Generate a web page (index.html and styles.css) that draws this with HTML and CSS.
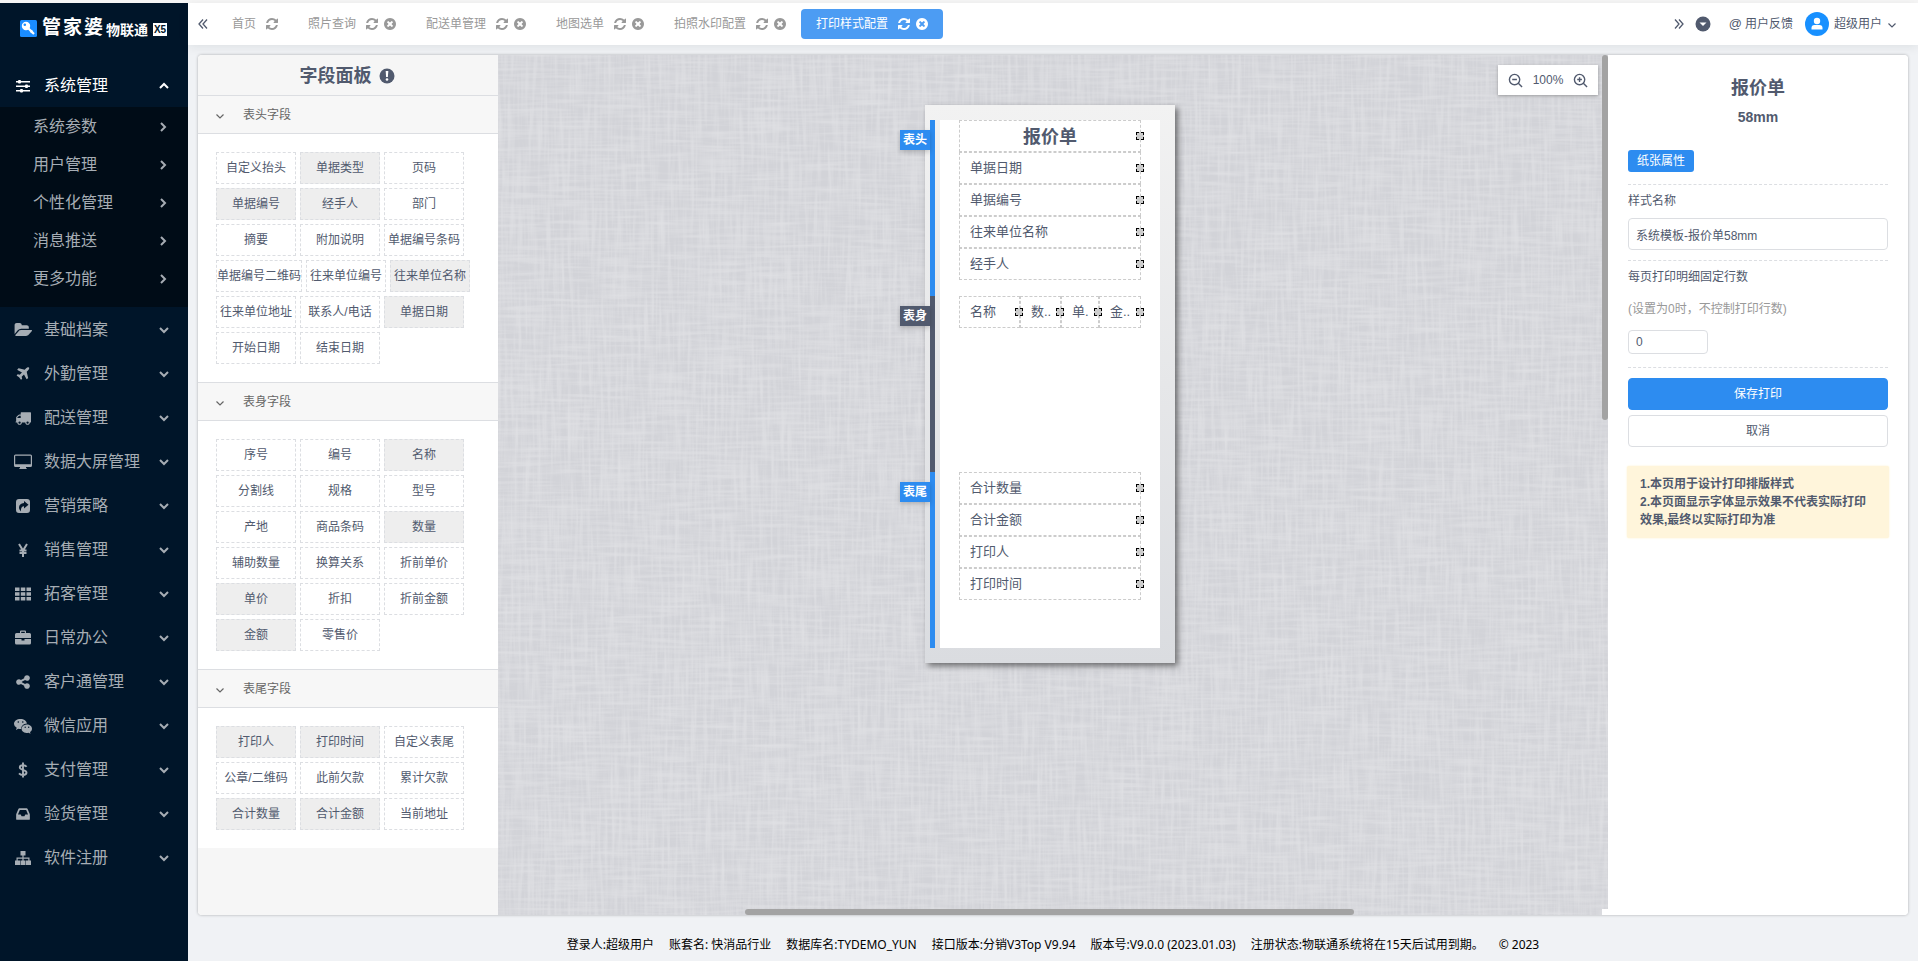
FILE: index.html
```html
<!DOCTYPE html>
<html lang="zh-CN">
<head>
<meta charset="utf-8">
<title>打印样式配置</title>
<link rel="stylesheet" href="styles.css">
</head>
<body>
<svg class="sprite" aria-hidden="true">
  <symbol id="i-refresh" viewBox="0 0 1792 1792"><path d="M1639 1056q0 5-1 7-64 268-268 434.500t-478 166.500q-146 0-282.500-55t-243.500-157l-129 129q-19 19-45 19t-45-19-19-45v-448q0-26 19-45t45-19h448q26 0 45 19t19 45-19 45l-137 137q71 66 161 102t187 36q134 0 250-65t186-179q11-17 53-117 8-23 30-23h192q13 0 22.500 9.500t9.500 22.500zm25-800v448q0 26-19 45t-45 19h-448q-26 0-45-19t-19-45 19-45l138-138q-148-137-349-137-134 0-250 65t-186 179q-11 17-53 117-8 23-30 23h-199q-13 0-22.500-9.500t-9.500-22.500v-7q65-268 270-434.500t480-166.500q146 0 284 55.500t245 156.500l130-129q19-19 45-19t45 19 19 45z"/></symbol>
  <symbol id="i-close" viewBox="0 0 1792 1792"><path d="M1277 1122q0-26-19-45l-181-181 181-181q19-19 19-45 0-27-19-46l-90-90q-19-19-46-19-26 0-45 19l-181 181-181-181q-19-19-45-19-27 0-46 19l-90 90q-19 19-19 46 0 26 19 45l181 181-181 181q-19 19-19 45 0 27 19 46l90 90q19 19 46 19 26 0 45-19l181-181 181 181q19 19 45 19 27 0 46-19l90-90q19-19 19-46zm387-226q0 209-103 385.500t-279.500 279.500-385.500 103-385.500-103-279.500-279.500-103-385.500 103-385.500 279.500-279.500 385.500-103 385.500 103 279.500 279.500 103 385.500z"/></symbol>
  <symbol id="i-sliders" viewBox="0 0 18 18"><path d="M2 4h14v1.500H2zM2 8.500h14V10H2zM2 13h14v1.500H2z"/><rect x="4" y="3" width="3" height="3.500" rx="1"/><rect x="11" y="7.500" width="3" height="3.500" rx="1"/><rect x="6" y="12" width="3" height="3.500" rx="1"/></symbol>
  <symbol id="i-folder" viewBox="0 0 1943 1792"><path d="M1943 952q0 31-31 66l-336 396q-43 51-120.500 86.500t-143.500 35.500h-1088q-34 0-60.500-13t-26.500-43q0-31 31-66l336-396q43-51 120.500-86.500t143.500-35.500h1088q34 0 60.500 13t26.500 43zm-343-344v160h-832q-94 0-197 47.500t-164 119.500l-337 396-5 6q0-4-.500-12.500t-.500-12.500v-960q0-92 66-158t158-66h320q92 0 158 66t66 158v32h544q92 0 158 66t66 158z"/></symbol>
  <symbol id="i-plane" viewBox="0 0 1792 1792"><path d="M1568 160q44 52 12 148t-108 172l-161 161 160 696q5 19-12 33l-128 96q-7 6-19 6-4 0-7-1-15-3-21-16l-279-508-259 259 53 194q5 17-8 31l-96 96q-9 9-23 9h-2q-15-2-24-13l-189-252-252-189q-11-7-13-23-1-13 9-25l96-97q9-9 23-9 6 0 8 1l194 53 259-259-508-279q-14-8-17-24-2-16 9-27l128-128q14-13 30-8l665 159 160-160q76-76 172-108t148 12z"/></symbol>
  <symbol id="i-truck" viewBox="0 0 1792 1792"><path d="M640 1408q0-52-38-90t-90-38-90 38-38 90 38 90 90 38 90-38 38-90zm-384-512h384v-256h-158q-13 0-22 9l-195 195q-9 9-9 22v30zm1280 512q0-52-38-90t-90-38-90 38-38 90 38 90 90 38 90-38 38-90zm256-1088v1024q0 15-4 26.500t-13.500 18.500-16.500 11.500-23.500 6-22.500 2-25.500 0-22.500-.500q0 106-75 181t-181 75-181-75-75-181h-384q0 106-75 181t-181 75-181-75-75-181h-64q-3 0-22.500.500t-25.500 0-22.500-2-23.500-6-16.500-11.500-13.500-18.500-4-26.500q0-26 19-45t45-19v-320q0-8-.500-35t0-38 2.500-34.500 6.500-37 14-30.500 22.500-30l198-198q19-19 50.500-32t58.500-13h160v-192q0-26 19-45t45-19h1024q26 0 45 19t19 45z"/></symbol>
  <symbol id="i-desktop" viewBox="0 0 18 18"><path fill-rule="evenodd" d="M1.500 1.500h15Q18 1.500 18 3v9.500q0 1.500-1.500 1.500H12v1q1 .500 1 1H5q0-.500 1-1v-1H1.500Q0 14 0 12.500V3q0-1.500 1.500-1.500zM1.200 2.700v8.600h15.600V2.700z"/></symbol>
  <symbol id="i-share" viewBox="0 0 18 18"><path fill-rule="evenodd" d="M5 2h8q3 0 3 3v8q0 3-3 3H5q-3 0-3-3V5q0-3 3-3zM10 4v2Q5 6.500 5 10.500q0 2 2 4-.500-5 3-5.300V11.500L14.500 7.700z"/></symbol>
  <symbol id="i-yen" viewBox="0 0 18 18"><path d="M5 3l4 6.500L13 3M9 9v7M5.500 9.500h7M5.500 12h7" fill="none" stroke="currentColor" stroke-width="2"/></symbol>
  <symbol id="i-grid" viewBox="0 0 18 18"><path d="M1 2.500h4.500v3.500H1zM6.800 2.500h4.500v3.500H6.800zM12.500 2.500H17v3.500h-4.500zM1 7.300h4.500v3.500H1zM6.800 7.300h4.500v3.500H6.800zM12.500 7.300H17v3.500h-4.500zM1 12h4.500v3.500H1zM6.800 12h4.500v3.500H6.800zM12.500 12H17v3.500h-4.500z"/></symbol>
  <symbol id="i-case" viewBox="0 0 18 18"><path fill-rule="evenodd" d="M6 4V2.500Q6 1.500 7 1.500h4q1 0 1 1V4h3.500Q17 4 17 5.500V9H1V5.500Q1 4 2.500 4zM7.200 4h3.600V2.700H7.200zM1 10h6.500v1.500h3V10H17v4q0 1.500-1.500 1.500h-13Q1 15.500 1 14z"/></symbol>
  <symbol id="i-nodes" viewBox="0 0 1792 1792"><path d="M1344 1024q133 0 226.500 93.500t93.500 226.500-93.500 226.500-226.500 93.500-226.500-93.500-93.500-226.500q0-12 2-34l-360-180q-92 86-218 86-133 0-226.500-93.500t-93.500-226.500 93.500-226.500 226.500-93.500q126 0 218 86l360-180q-2-22-2-34 0-133 93.500-226.500t226.500-93.500 226.500 93.500 93.500 226.500-93.500 226.500-226.500 93.500q-126 0-218-86l-360 180q2 22 2 34t-2 34l360 180q92-86 218-86z"/></symbol>
  <symbol id="i-wechat" viewBox="0 0 18 18"><path fill-rule="evenodd" d="M6.500 2C10 2 12.500 4 13 6.600 9.500 6.800 7 9 7.300 12q-1.200.200-3-.300L2 13l.700-2.200Q0 9 0 6.900C0 4 3 2 6.500 2zM3.500 5a.8.8 0 1 0 1.600 0 .8.8 0 1 0-1.600 0zM8 5a.8.8 0 1 0 1.600 0A.8.8 0 1 0 8 5z"/><path fill-rule="evenodd" d="M12.800 7.500c3 0 5.200 1.900 5.200 4.200 0 1.500-.800 2.600-2 3.400l.500 1.700-2-1q-4 .900-6-1.500c-2.300-3 .300-6.800 4.300-6.800zM10.500 10.300a.7.7 0 1 0 1.400 0 .7.7 0 1 0-1.400 0zM14 10.300a.7.7 0 1 0 1.400 0 .7.7 0 1 0-1.400 0z"/></symbol>
  <symbol id="i-dollar" viewBox="0 0 18 18"><path d="M12.600 5.800Q11.500 4.300 9 4.300 5.800 4.300 5.800 6.500C5.800 9.300 12.500 8.300 12.500 11.600 12.500 13.700 10.800 14 9 14q-2.500 0-4-1.700M9 1.500v15" fill="none" stroke="currentColor" stroke-width="1.900"/></symbol>
  <symbol id="i-inbox" viewBox="0 0 1792 1792"><path d="M1151 960h316q-1-3-2.500-8t-2.500-8l-212-496h-708l-212 496q-1 2-2.500 8t-2.500 8h316l95 192h320zm513 30v482q0 26-19 45t-45 19h-1408q-26 0-45-19t-19-45v-482q0-62 25-123l238-552q10-25 36.500-42t52.500-17h832q26 0 52.500 17t36.500 42l238 552q25 61 25 123z"/></symbol>
  <symbol id="i-tree" viewBox="0 0 18 18"><path d="M6.500 2h5v4.500H9.600v2H15.500V11.500H17V16h-5v-4.500h2.300V9.700H9.600v1.800h1.900V16h-5v-4.500h1.900V9.700H3.700v1.800H6V16H1v-4.500h1.500V8.500h5.900v-2H6.500z"/></symbol>
  <symbol id="i-down" viewBox="0 0 10 10"><path d="M1 3l4 4 4-4" fill="none" stroke="currentColor" stroke-width="2"/></symbol>
  <symbol id="i-thin-down" viewBox="0 0 10 10"><path d="M1.500 3.500L5 7l3.500-3.500" fill="none" stroke="currentColor" stroke-width="1.200"/></symbol>
  <symbol id="i-up" viewBox="0 0 10 10"><path d="M1 7l4-4 4 4" fill="none" stroke="currentColor" stroke-width="2"/></symbol>
  <symbol id="i-right" viewBox="0 0 10 10"><path d="M3 1l4 4-4 4" fill="none" stroke="currentColor" stroke-width="2"/></symbol>
  <symbol id="i-dleft" viewBox="0 0 12 12"><path d="M6 1.500L2 6l4 4.500M10 1.500L6 6l4 4.500" fill="none" stroke="currentColor" stroke-width="1.300"/></symbol>
  <symbol id="i-dright" viewBox="0 0 12 12"><path d="M2 1.500L6 6l-4 4.500M6 1.500L10 6l-4 4.500" fill="none" stroke="currentColor" stroke-width="1.300"/></symbol>
  <symbol id="i-caret" viewBox="0 0 16 16"><circle cx="8" cy="8" r="7.500"/><path d="M4.500 6.500h7L8 10z" fill="#fff"/></symbol>
  <symbol id="i-info" viewBox="0 0 16 16"><circle cx="8" cy="8" r="7.500"/><path d="M6.700 3h2.600l-.400 6H7.100z" fill="#fff"/><circle cx="8" cy="11.500" r="1.300" fill="#fff"/></symbol>
  <symbol id="i-avatar" viewBox="0 0 24 24"><circle cx="12" cy="12" r="12" fill="#1890ff"/><circle cx="12" cy="9" r="3.200" fill="#fff"/><path d="M6.500 17.500v-1.500q0-3 3-3h5q3 0 3 3v1.500z" fill="#fff"/></symbol>
  <symbol id="i-minus" viewBox="0 0 16 16"><g fill="none" stroke="currentColor" stroke-width="1.500"><circle cx="7" cy="7" r="5.500"/><path d="M4.500 7h5M11 11l4 4"/></g></symbol>
  <symbol id="i-plus" viewBox="0 0 16 16"><g fill="none" stroke="currentColor" stroke-width="1.500"><circle cx="7" cy="7" r="5.500"/><path d="M4.500 7h5M7 4.500v5M11 11l4 4"/></g></symbol>
  <symbol id="i-key" viewBox="0 0 17 17"><rect width="17" height="17" rx="1.500" fill="#1a8cff"/><path fill="#fff" fill-rule="evenodd" d="M6 1.800a4.200 4.200 0 1 1 0 8.400 4.200 4.200 0 1 1 0-8.400zM4.800 3.500a1.300 1.300 0 1 0 0 2.600 1.300 1.300 0 1 0 0-2.600z"/><path d="M8 8l6 6M10.500 12.500l2-2" stroke="#fff" stroke-width="2.200"/></symbol>
</svg>
<div class="app">
  <aside class="sidebar">
    <div class="brand">
      <svg class="brand-mark"><use href="#i-key"/></svg>
      <span class="brand-name"><b>管</b><b>家</b><b>婆</b></span><span class="brand-sub">物联通</span><span class="brand-tag">X5</span>
    </div>
    <nav>
      <ul class="menu">
        <li><button class="item open"><svg class="ico"><use href="#i-sliders"/></svg><span>系统管理</span><svg class="arr"><use href="#i-up"/></svg></button>
          <ul class="submenu">
            <li><button class="subitem"><span>系统参数</span><svg class="arr"><use href="#i-right"/></svg></button></li>
            <li><button class="subitem"><span>用户管理</span><svg class="arr"><use href="#i-right"/></svg></button></li>
            <li><button class="subitem"><span>个性化管理</span><svg class="arr"><use href="#i-right"/></svg></button></li>
            <li><button class="subitem"><span>消息推送</span><svg class="arr"><use href="#i-right"/></svg></button></li>
            <li><button class="subitem"><span>更多功能</span><svg class="arr"><use href="#i-right"/></svg></button></li>
          </ul>
        </li>
        <li><button class="item"><svg class="ico"><use href="#i-folder"/></svg><span>基础档案</span><svg class="arr"><use href="#i-down"/></svg></button></li>
        <li><button class="item"><svg class="ico small"><use href="#i-plane"/></svg><span>外勤管理</span><svg class="arr"><use href="#i-down"/></svg></button></li>
        <li><button class="item"><svg class="ico small"><use href="#i-truck"/></svg><span>配送管理</span><svg class="arr"><use href="#i-down"/></svg></button></li>
        <li><button class="item"><svg class="ico"><use href="#i-desktop"/></svg><span>数据大屏管理</span><svg class="arr"><use href="#i-down"/></svg></button></li>
        <li><button class="item"><svg class="ico"><use href="#i-share"/></svg><span>营销策略</span><svg class="arr"><use href="#i-down"/></svg></button></li>
        <li><button class="item"><svg class="ico"><use href="#i-yen"/></svg><span>销售管理</span><svg class="arr"><use href="#i-down"/></svg></button></li>
        <li><button class="item"><svg class="ico"><use href="#i-grid"/></svg><span>拓客管理</span><svg class="arr"><use href="#i-down"/></svg></button></li>
        <li><button class="item"><svg class="ico"><use href="#i-case"/></svg><span>日常办公</span><svg class="arr"><use href="#i-down"/></svg></button></li>
        <li><button class="item"><svg class="ico small"><use href="#i-nodes"/></svg><span>客户通管理</span><svg class="arr"><use href="#i-down"/></svg></button></li>
        <li><button class="item"><svg class="ico"><use href="#i-wechat"/></svg><span>微信应用</span><svg class="arr"><use href="#i-down"/></svg></button></li>
        <li><button class="item"><svg class="ico"><use href="#i-dollar"/></svg><span>支付管理</span><svg class="arr"><use href="#i-down"/></svg></button></li>
        <li><button class="item"><svg class="ico small"><use href="#i-inbox"/></svg><span>验货管理</span><svg class="arr"><use href="#i-down"/></svg></button></li>
        <li><button class="item"><svg class="ico"><use href="#i-tree"/></svg><span>软件注册</span><svg class="arr"><use href="#i-down"/></svg></button></li>
      </ul>
    </nav>
  </aside>
  <div class="body">
    <header class="topbar">
      <button class="nav-arrow" aria-label="向左"><svg><use href="#i-dleft"/></svg></button>
      <div class="tabs">
        <div class="tab"><a href="#">首页</a><svg><use href="#i-refresh"/></svg></div>
        <div class="tab"><a href="#">照片查询</a><svg><use href="#i-refresh"/></svg><svg><use href="#i-close"/></svg></div>
        <div class="tab"><a href="#">配送单管理</a><svg><use href="#i-refresh"/></svg><svg><use href="#i-close"/></svg></div>
        <div class="tab"><a href="#">地图选单</a><svg><use href="#i-refresh"/></svg><svg><use href="#i-close"/></svg></div>
        <div class="tab"><a href="#">拍照水印配置</a><svg><use href="#i-refresh"/></svg><svg><use href="#i-close"/></svg></div>
        <div class="tab current"><a href="#">打印样式配置</a><svg><use href="#i-refresh"/></svg><svg><use href="#i-close"/></svg></div>
      </div>
      <button class="nav-arrow" aria-label="向右"><svg><use href="#i-dright"/></svg></button>
      <button class="tab-menu" aria-label="标签菜单"><svg><use href="#i-caret"/></svg></button>
      <a class="feedback" href="#"><span class="at">@</span>用户反馈</a>
      <button class="user"><svg class="avatar"><use href="#i-avatar"/></svg><span>超级用户</span><svg class="user-arr"><use href="#i-thin-down"/></svg></button>
    </header>
    <main class="designer">
      <section class="fields">
        <h2 class="fields-title">字段面板<svg><use href="#i-info"/></svg></h2>
        <button class="group"><svg><use href="#i-thin-down"/></svg>表头字段</button>
        <div class="chips">
          <button class="chip">自定义抬头</button><button class="chip used">单据类型</button><button class="chip">页码</button>
          <button class="chip used">单据编号</button><button class="chip used">经手人</button><button class="chip">部门</button>
          <button class="chip">摘要</button><button class="chip">附加说明</button><button class="chip">单据编号条码</button>
          <button class="chip">单据编号二维码</button><button class="chip">往来单位编号</button><button class="chip used">往来单位名称</button>
          <button class="chip">往来单位地址</button><button class="chip">联系人/电话</button><button class="chip used">单据日期</button>
          <button class="chip">开始日期</button><button class="chip">结束日期</button>
        </div>
        <button class="group"><svg><use href="#i-thin-down"/></svg>表身字段</button>
        <div class="chips">
          <button class="chip">序号</button><button class="chip">编号</button><button class="chip used">名称</button>
          <button class="chip">分割线</button><button class="chip">规格</button><button class="chip">型号</button>
          <button class="chip">产地</button><button class="chip">商品条码</button><button class="chip used">数量</button>
          <button class="chip">辅助数量</button><button class="chip">换算关系</button><button class="chip">折前单价</button>
          <button class="chip used">单价</button><button class="chip">折扣</button><button class="chip">折前金额</button>
          <button class="chip used">金额</button><button class="chip">零售价</button>
        </div>
        <button class="group"><svg><use href="#i-thin-down"/></svg>表尾字段</button>
        <div class="chips">
          <button class="chip used">打印人</button><button class="chip used">打印时间</button><button class="chip">自定义表尾</button>
          <button class="chip">公章/二维码</button><button class="chip">此前欠款</button><button class="chip">累计欠款</button>
          <button class="chip used">合计数量</button><button class="chip used">合计金额</button><button class="chip">当前地址</button>
        </div>
      </section>
      <section class="canvas">
        <svg class="linen" aria-hidden="true">
          <filter id="warp" x="0" y="0" width="100%" height="100%"><feTurbulence type="fractalNoise" baseFrequency="0.3 0.02" numOctaves="2" seed="3"/><feColorMatrix values="0 0 0 0 1  0 0 0 0 1  0 0 0 0 1  1.600 0 0 0 -0.600"/></filter>
          <filter id="weft" x="0" y="0" width="100%" height="100%"><feTurbulence type="fractalNoise" baseFrequency="0.02 0.3" numOctaves="2" seed="8"/><feColorMatrix values="0 0 0 0 1  0 0 0 0 1  0 0 0 0 1  1.600 0 0 0 -0.600"/></filter>
          <rect width="100%" height="100%" filter="url(#warp)"/><rect width="100%" height="100%" filter="url(#weft)"/>
        </svg>
        <div class="paper">
          <div class="part head">
            <div class="rail"><span class="rail-label">表头</span></div>
            <div class="sheet">
              <div class="row"><div class="cell title">报价单<i class="grip"></i></div></div>
              <div class="row"><div class="cell"><span>单据日期</span><i class="grip"></i></div></div>
              <div class="row"><div class="cell"><span>单据编号</span><i class="grip"></i></div></div>
              <div class="row"><div class="cell"><span>往来单位名称</span><i class="grip"></i></div></div>
              <div class="row"><div class="cell"><span>经手人</span><i class="grip"></i></div></div>
            </div>
          </div>
          <div class="part detail">
            <div class="rail"><span class="rail-label">表身</span></div>
            <div class="sheet">
              <div class="row columns"><div class="cell"><span>名称</span><i class="grip"></i></div><div class="cell"><span>数..</span><i class="grip"></i></div><div class="cell"><span>单.</span><i class="grip"></i></div><div class="cell"><span>金..</span><i class="grip"></i></div></div>
            </div>
          </div>
          <div class="part foot">
            <div class="rail"><span class="rail-label">表尾</span></div>
            <div class="sheet">
              <div class="row"><div class="cell"><span>合计数量</span><i class="grip"></i></div></div>
              <div class="row"><div class="cell"><span>合计金额</span><i class="grip"></i></div></div>
              <div class="row"><div class="cell"><span>打印人</span><i class="grip"></i></div></div>
              <div class="row"><div class="cell"><span>打印时间</span><i class="grip"></i></div></div>
            </div>
          </div>
        </div>
        <div class="zoombar"><button aria-label="缩小"><svg><use href="#i-minus"/></svg></button><span>100%</span><button aria-label="放大"><svg><use href="#i-plus"/></svg></button></div>
        <div class="scroll-y"></div>
        <div class="scroll-x"></div>
        <div class="scroll-corner"></div>
      </section>
      <form class="props">
        <h2>报价单</h2>
        <h3>58mm</h3>
        <button type="button" class="props-tab">纸张属性</button>
        <div class="field">
          <label for="style-name">样式名称</label>
          <input id="style-name" type="text" value="系统模板-报价单58mm">
        </div>
        <div class="field rows">
          <label for="row-count">每页打印明细固定行数</label>
          <p class="hint">(设置为0时，不控制打印行数)</p>
          <input id="row-count" type="text" value="0">
        </div>
        <div class="actions">
          <button type="button" class="btn primary">保存打印</button>
          <button type="button" class="btn">取消</button>
        </div>
        <p class="notice">1.本页用于设计打印排版样式<br>2.本页面显示字体显示效果不代表实际打印效果,最终以实际打印为准</p>
      </form>
    </main>
    <footer class="status">
      <span>登录人:超级用户</span><span>账套名: 快消品行业</span><span>数据库名:TYDEMO_YUN</span><span>接口版本:分销V3Top V9.94</span><span>版本号:V9.0.0 (2023.01.03)</span><span>注册状态:物联通系统将在15天后试用到期。</span><span>© 2023</span>
    </footer>
  </div>
</div>
</body>
</html>
```
FILE: styles.css
```css
* { box-sizing: border-box; }
body {
  margin: 0;
  background: #f0f2f5;
  color: #515a6e;
  font: 12px/18px "Liberation Sans", "Noto Sans CJK SC", sans-serif;
}
button { font: inherit; color: inherit; background: none; border: 0; padding: 0; margin: 0; cursor: pointer; }
a { color: inherit; text-decoration: none; }
ul { list-style: none; margin: 0; padding: 0; }
h2, h3, p { margin: 0; }
svg { fill: currentColor; flex: none; display: block; }
.sprite { position: absolute; width: 0; height: 0; }

.app { display: flex; min-height: 100vh; border-top: 3px solid #bfbfbf; border-image: linear-gradient(#f6f6f6 66%, #bdbdbd 67%) 3; }

/* sidebar */
.sidebar { flex: 0 0 188px; background: #001529; color: #a6adb4; font-size: 16px; }
.brand { display: flex; align-items: center; height: 60px; padding: 0 20px 10px; color: #fff; white-space: nowrap; }
.brand-mark { width: 17px; height: 17px; margin-right: 5px; }
.brand-name { display: flex; gap: 2px; font-size: 19px; }
.brand-sub { font-size: 14px; font-weight: 700; margin: 3px 5px 0 3px; }
.brand-tag { margin-top: 3px; width: 14px; height: 13px; background: #fff; color: #001529; font-size: 10px; line-height: 13px; font-weight: 700; text-align: center; }
.item, .subitem { display: flex; align-items: center; width: 100%; text-align: left; padding-top: 2px; padding-right: 19px; }
.item { height: 44px; padding-left: 14px; }
.item span, .subitem span { flex: 1; }
.ico { width: 18px; height: 18px; margin-right: 12px; }
.ico.small { padding: 1px; }
.arr { width: 10px; height: 10px; }
.item.open { color: #fff; }
.submenu { background: #000c17; padding-bottom: 10px; }
.subitem { height: 38px; padding-left: 33px; padding-right: 20px; }

/* top bar */
.body { flex: 1; min-width: 0; display: flex; flex-direction: column; }
.topbar { display: flex; align-items: center; height: 42px; background: #fff; padding: 0 20px 1px 9px; box-shadow: 0 2px 10px rgba(0, 40, 40, .08); }
.nav-arrow svg { width: 12px; height: 12px; }
.tabs { flex: 1; display: flex; margin-left: 8px; color: #999; }
.tab { display: flex; align-items: center; height: 30px; padding: 0 14px 0 15px; border-radius: 4px; }
.tab a { margin-right: 5px; }
.tab svg { width: 14px; height: 14px; margin-left: 4px; }
.tab.current { background: #4c9cf3; color: #fff; }
.tab-menu { margin-left: 10px; }
.tab-menu svg { width: 16px; height: 16px; }
.feedback { display: flex; align-items: center; margin-left: 18px; }
.at { font-size: 13px; margin-right: 3px; }
.user { display: flex; align-items: center; margin-left: 12px; }
.avatar { width: 24px; height: 24px; margin-right: 5px; }
.user-arr { width: 10px; height: 10px; margin: 2px 1px 0 5px; }

/* designer */
.designer { flex: 1; display: flex; margin: 10px 10px 0; background: #fff; border-radius: 4px; overflow: hidden; box-shadow: 0 0 3px rgba(0, 0, 0, .3); }
.fields { flex: 0 0 300px; background: #f6f6f6; }
.fields-title { display: flex; align-items: center; justify-content: center; height: 40px; padding: 1px 2px 0 0; font-size: 18px; line-height: 24px; }
.fields-title svg { width: 16px; height: 16px; margin-left: 7px; }
.group { display: flex; align-items: center; width: 100%; height: 39px; padding-left: 17px; background: #f7f7f7; border-top: 1px solid #dcdee2; border-bottom: 1px solid #dcdee2; color: #666; }
.group svg { width: 10px; height: 10px; margin: 2px 18px 0 0; }
.chips { display: flex; flex-wrap: wrap; gap: 4px; padding: 18px; background: #fff; }
.chip { min-width: 80px; height: 32px; border: 1px dashed #dcdee2; white-space: nowrap; }
.chip.used { background: #eee; }

.canvas { position: relative; flex: 1; min-width: 0; padding: 50px 6px 0 0; background: #d2d3d8; }
.linen { position: absolute; inset: 0; width: 100%; height: 100%; opacity: .32; }
.paper { position: relative; width: 250px; margin: 0 auto; padding: 15px 15px 15px 5px; background: linear-gradient(#f2f2f2, #dadce0); box-shadow: 3px 3px 6px rgba(0, 0, 0, .5); }
.part { display: flex; gap: 5px; min-height: 176px; }
.rail { position: relative; width: 5px; background: #2d8cf0; }
.rail-label { position: absolute; top: 10px; right: 5px; width: 30px; height: 20px; line-height: 20px; text-align: center; color: #fff; font-weight: 700; background: #2d8cf0; box-shadow: 0 2px 5px rgba(0, 0, 0, .2); }
.detail .rail, .detail .rail-label { background: #515a6e; }
.sheet { flex: 1; padding: 0 19px; background: #fff; font-size: 13px; }
.row { display: flex; }
.columns { display: grid; grid-template-columns: 61px 41px 38px 1fr; }
.cell { position: relative; flex: 1; display: flex; align-items: center; height: 32px; padding: 0 0 1px 10px; border: 1px dashed #ccc; white-space: nowrap; }
.title { justify-content: center; padding: 1px 10px 0; font-size: 18px; font-weight: 700; }
.grip { position: absolute; z-index: 1; right: -4px; top: 11px; width: 8px; height: 8px; border: 1px dashed #000; background: #ccc; }

.zoombar { position: absolute; top: 10px; right: 10px; display: flex; align-items: center; justify-content: space-between; width: 100px; height: 30px; padding: 0 10px; background: #fff; box-shadow: 0 1px 3px rgba(0, 0, 0, .3); }
.zoombar svg { width: 15px; height: 15px; }
.scroll-y { position: absolute; top: 0; right: 0; width: 6px; height: 365px; border-radius: 3px; background: #a3a3a3; }
.scroll-x { position: absolute; bottom: 0; left: 247px; width: 609px; height: 6px; border-radius: 3px; background: #a3a3a3; }
.scroll-corner { position: absolute; right: 0; bottom: 0; width: 6px; height: 6px; background: #fff; }

/* properties */
.props { flex: 0 0 300px; padding: 20px; background: #fff; }
.props h2 { font-size: 18px; line-height: 27px; text-align: center; }
.props h3 { margin-top: 4px; font-size: 14px; line-height: 22px; text-align: center; }
.props-tab { display: block; margin: 22px 0 12px; height: 22px; padding: 0 9px; border-radius: 3px; background: #2d8cf0; color: #fff; }
.field { border-top: 1px dashed #dcdee2; padding: 6px 0 10px; }
.field label { display: block; line-height: 20px; }
.field input { display: block; width: 100%; height: 32px; margin-top: 7px; padding: 0 7px; border: 1px solid #dcdee2; border-radius: 4px; background: #fff; font: inherit; color: inherit; }
.field .hint { margin-top: 13px; line-height: 18px; color: #999; }
.field.rows { padding-bottom: 13px; }
.field.rows input { width: 80px; height: 24px; margin-top: 12px; }
.actions { display: grid; gap: 5px; padding-top: 10px; border-top: 1px dashed #dcdee2; }
.btn { height: 32px; border: 1px solid #dcdee2; border-radius: 4px; }
.btn.primary { background: #2d8cf0; border-color: #2d8cf0; color: #fff; }
.notice { margin: 19px -1px 0; padding: 9px 13px; border-radius: 2px; background: #fff5db; box-shadow: 0 0 2px #fff0c8; font-weight: 700; }

.status { display: flex; justify-content: center; gap: 15px; height: 46px; padding-top: 21px; color: #000; font-family: "Noto Sans", "Noto Sans CJK SC", sans-serif; white-space: nowrap; }
```
